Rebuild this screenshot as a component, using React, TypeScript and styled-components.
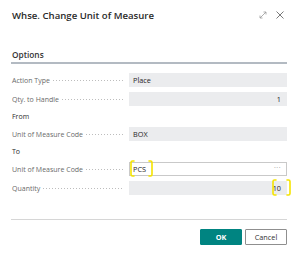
import React from 'react';
import styled, { createGlobalStyle } from 'styled-components';

const GlobalStyle = createGlobalStyle`
  html, body {
    margin: 0;
    padding: 0;
    background: #ffffff;
  }
  body {
    font-family: 'Open Sans', 'Noto Sans', sans-serif;
    color: #212121;
  }
`;

const Dialog = styled.div`
  width: 297px;
  height: 255px;
  box-sizing: border-box;
  padding: 0 10px 0 11px;
  display: flex;
  flex-direction: column;
  background: #fff;
`;

const Header = styled.div`
  display: flex;
  align-items: center;
  justify-content: space-between;
  height: 30px;
  padding-left: 1px;
`;

const Title = styled.div`
  font-size: 9.6px;
  font-weight: 600;
  color: #2a2a2a;
`;

const HeaderIcons = styled.div`
  display: flex;
  align-items: center;
  gap: 9px;
  margin-right: 3px;
`;

const Section = styled.div`
  margin-top: 16px;
  height: 16px;
  border-bottom: 2px solid #b3bac2;
  display: flex;
  align-items: center;
  padding-left: 1px;
  font-size: 8.3px;
  font-weight: 600;
  color: #333;
`;

const Fields = styled.div`
  display: flex;
  flex-direction: column;
  gap: 5px;
  margin-top: 9px;
`;

const Row = styled.div`
  display: grid;
  grid-template-columns: 118px 158px;
  height: 14px;
  align-items: center;
`;

const LabelCell = styled.div`
  display: flex;
  align-items: center;
  padding-left: 1px;
  padding-right: 5px;
  min-width: 0;
`;

const Label = styled.span`
  font-size: 7px;
  color: #6a6a6a;
  white-space: nowrap;
  margin-right: 3px;
`;

const Leader = styled.span`
  flex: 1;
  height: 1px;
  background-image: linear-gradient(to right, #bdbdbd 1px, transparent 1px);
  background-size: 3px 1px;
  background-repeat: repeat-x;
`;

const GroupLabel = styled.div`
  height: 11px;
  display: flex;
  align-items: center;
  padding-left: 1px;
  font-size: 7px;
  color: #2b2b2b;
`;

const Field = styled.div<{ $editable?: boolean; $align?: 'left' | 'right' }>`
  position: relative;
  box-sizing: border-box;
  height: 14px;
  display: flex;
  align-items: center;
  justify-content: ${(p) => (p.$align === 'right' ? 'flex-end' : 'space-between')};
  padding: 0 5px 0 3px;
  font-size: 7.3px;
  color: #262626;
  background: ${(p) => (p.$editable ? '#ffffff' : '#ebecee')};
  border: 1px solid ${(p) => (p.$editable ? '#c9c9c9' : '#ebecee')};
`;

const Ellipsis = styled.span`
  color: #8a8a8a;
  font-size: 7px;
  letter-spacing: 0.5px;
  margin-top: -3px;
`;

const Highlight = styled.svg`
  position: absolute;
  pointer-events: none;
  overflow: visible;
`;

const Footer = styled.div`
  margin-top: 24px;
  border-top: 1px solid #d6d6d6;
  display: flex;
  justify-content: flex-end;
  gap: 3px;
  padding-top: 9px;
`;

const Button = styled.button<{ $primary?: boolean }>`
  width: 42px;
  height: 16px;
  box-sizing: border-box;
  padding: 0;
  font-family: inherit;
  font-size: 7.3px;
  font-weight: ${(p) => (p.$primary ? 700 : 400)};
  color: ${(p) => (p.$primary ? '#ffffff' : '#333333')};
  background: ${(p) => (p.$primary ? '#008481' : '#ffffff')};
  border: 1px solid ${(p) => (p.$primary ? '#008481' : '#8f8f8f')};
  border-radius: 1px;
`;

const Bracket: React.FC<{ left: number; top: number; width: number; height: number }> = ({
  left,
  top,
  width,
  height,
}) => (
  <Highlight width={width} height={height} style={{ left, top }} viewBox={`0 0 ${width} ${height}`}>
    <path
      d={`M4 1 H2.5 Q1 1 1 2.5 V${height - 2.5} Q1 ${height - 1} 2.5 ${height - 1} H4`}
      fill="none"
      stroke="#f5e400"
      strokeWidth="1.6"
      strokeLinecap="round"
    />
    <path
      d={`M${width - 4} 1 H${width - 2.5} Q${width - 1} 1 ${width - 1} 2.5 V${height - 2.5} Q${width - 1} ${
        height - 1
      } ${width - 2.5} ${height - 1} H${width - 4}`}
      fill="none"
      stroke="#f5e400"
      strokeWidth="1.6"
      strokeLinecap="round"
    />
  </Highlight>
);

const rowsTop = [
  { label: 'Action Type', value: 'Place' },
  { label: 'Qty. to Handle', value: '1', align: 'right' as const },
];

const App: React.FC = () => (
  <>
    <GlobalStyle />
    <Dialog>
      <Header>
        <Title>Whse. Change Unit of Measure</Title>
        <HeaderIcons>
          <svg width="8" height="8" viewBox="0 0 8 8">
            <path d="M1 7 L7 1 M4.5 1 H7 V3.5 M1 4.5 V7 H3.5" fill="none" stroke="#9a9a9a" strokeWidth="0.8" />
          </svg>
          <svg width="8" height="8" viewBox="0 0 8 8">
            <path d="M0.5 0.5 L7.5 7.5 M7.5 0.5 L0.5 7.5" fill="none" stroke="#6a6a6a" strokeWidth="0.9" />
          </svg>
        </HeaderIcons>
      </Header>

      <Section>Options</Section>

      <Fields>
        {rowsTop.map((r) => (
          <Row key={r.label}>
            <LabelCell>
              <Label>{r.label}</Label>
              <Leader />
            </LabelCell>
            <Field $align={r.align}>{r.value}</Field>
          </Row>
        ))}
        <GroupLabel>From</GroupLabel>
        <Row>
          <LabelCell>
            <Label>Unit of Measure Code</Label>
            <Leader />
          </LabelCell>
          <Field>BOX</Field>
        </Row>
        <GroupLabel>To</GroupLabel>
        <Row>
          <LabelCell>
            <Label>Unit of Measure Code</Label>
            <Leader />
          </LabelCell>
          <Field $editable>
            <span>PCS</span>
            <Ellipsis>···</Ellipsis>
            <Bracket left={0} top={-3} width={23} height={17} />
          </Field>
        </Row>
        <Row>
          <LabelCell>
            <Label>Quantity</Label>
            <Leader />
          </LabelCell>
          <Field $align="right">
            10
            <Bracket left={142} top={-3} width={19} height={17} />
          </Field>
        </Row>
      </Fields>

      <Footer>
        <Button $primary>OK</Button>
        <Button>Cancel</Button>
      </Footer>
    </Dialog>
  </>
);

export default App;
